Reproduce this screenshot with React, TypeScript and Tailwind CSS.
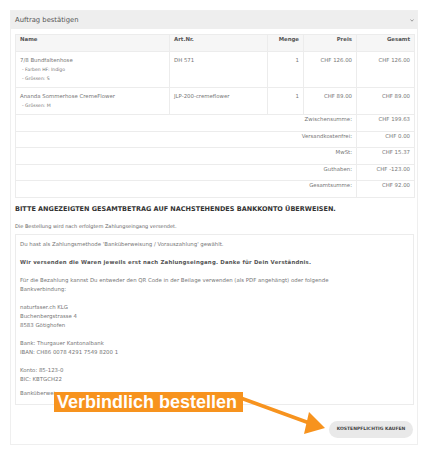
import React from "react";

type Item = { name: string; subs: string[]; art: string; qty: number; price: string; total: string };

const items: Item[] = [
  { name: "7/8 Bundfaltenhose", subs: ["- Farben HF: Indigo", "- Grössen: S"], art: "DH 571", qty: 1, price: "CHF 126.00", total: "CHF 126.00" },
  { name: "Ananda Sommerhose CremeFlower", subs: ["- Grössen: M"], art: "JLP-200-cremeflower", qty: 1, price: "CHF 89.00", total: "CHF 89.00" },
];

const totals = [
  ["Zwischensumme:", "CHF 199.63"],
  ["Versandkostenfrei:", "CHF 0.00"],
  ["MwSt:", "CHF 15.37"],
  ["Guthaben:", "CHF -123.00"],
  ["Gesamtsumme:", "CHF 92.00"],
];

const cell = "border border-[#ececec] px-[4px] align-top";

export default function App() {
  return (
    <div className="relative w-[440px] h-[456px] bg-white pt-[10px] pl-[10px] font-['DejaVu_Sans',sans-serif] text-[#777]">
      <div className="w-[408px] border border-[#efefef] pb-[6px]">
        {/* Header */}
        <div className="flex h-[18px] items-center justify-between bg-[#eeeeee] pl-[4px] pr-[3px] text-[6.8px] text-[#555]">
          <span>Auftrag bestätigen</span>
          <svg width="4" height="3" viewBox="0 0 4 3" className="mt-[1px]">
            <path d="M0.5 0.5 L2 2.2 L3.5 0.5" fill="none" stroke="#888" strokeWidth="0.8" />
          </svg>
        </div>

        <div className="px-[4px] pt-[5px]">
          <table className="w-[399px] border-collapse table-fixed text-[5.4px] leading-[9px]">
            <colgroup>
              <col className="w-[154px]" />
              <col className="w-[98px]" />
              <col className="w-[36px]" />
              <col className="w-[53px]" />
              <col className="w-[58px]" />
            </colgroup>
            <thead>
              <tr className="h-[17px] bg-[#f6f6f6] font-bold text-[#555]">
                <th className={`${cell} text-left align-middle`}>Name</th>
                <th className={`${cell} text-left align-middle`}>Art.Nr.</th>
                <th className={`${cell} text-right align-middle`}>Menge</th>
                <th className={`${cell} text-right align-middle`}>Preis</th>
                <th className={`${cell} text-right align-middle`}>Gesamt</th>
              </tr>
            </thead>
            <tbody>
              {items.map((it) => (
                <tr key={it.name}>
                  <td className={`${cell} py-[4px]`}>
                    <div>{it.name}</div>
                    {it.subs.map((s) => (
                      <div key={s} className="pl-[2px] text-[4.6px]">{s}</div>
                    ))}
                  </td>
                  <td className={`${cell} py-[4px]`}>{it.art}</td>
                  <td className={`${cell} py-[4px] text-right`}>{it.qty}</td>
                  <td className={`${cell} py-[4px] text-right`}>{it.price}</td>
                  <td className={`${cell} py-[4px] text-right`}>{it.total}</td>
                </tr>
              ))}
              {totals.map(([label, value]) => (
                <tr key={label} className="h-[16.5px]">
                  <td colSpan={4} className={`${cell} text-right align-middle`}>{label}</td>
                  <td className={`${cell} text-right align-middle`}>{value}</td>
                </tr>
              ))}
            </tbody>
          </table>

          <h3 className="mt-[7px] text-[6.5px] leading-[8px] font-bold text-[#333]">
            BITTE ANGEZEIGTEN GESAMTBETRAG AUF NACHSTEHENDES BANKKONTO ÜBERWEISEN.
          </h3>
          <p className="mt-[9px] text-[5px] leading-[8px] text-[#666]">
            Die Bestellung wird nach erfolgtem Zahlungseingang versendet.
          </p>

          <div className="mt-[4px] w-[399px] border border-[#ececec] px-[4px] pt-[5px] pb-[6px] text-[5.4px] leading-[9px]">
            <p className="mb-[9px]">Du hast als Zahlungsmethode 'Banküberweisung / Vorauszahlung' gewählt.</p>
            <p className="mb-[9px] font-semibold tracking-[0.2px] text-[#555]">
              Wir versenden die Waren jeweils erst nach Zahlungseingang. Danke für Dein Verständnis.
            </p>
            <p className="mb-[9px]">
              Für die Bezahlung kannst Du entweder den QR Code in der Beilage verwenden (als PDF angehängt) oder folgende
              <br />
              Bankverbindung:
            </p>
            <p className="mb-[9px]">
              naturfaser.ch KLG
              <br />
              Buchenbergstrasse 4
              <br />
              8583 Götighofen
            </p>
            <p className="mb-[9px]">
              Bank: Thurgauer Kantonalbank
              <br />
              IBAN: CH86 0078 4291 7549 8200 1
            </p>
            <p className="mb-[5px]">
              Konto: 85-123-0
              <br />
              BIC: KBTGCH22
            </p>
            <p>Banküberweisung</p>
          </div>

          <div className="mt-[16px] flex justify-end">
            <button className="h-[17px] w-[84px] rounded-full bg-[#e9e9e9] text-[4.5px] font-bold text-[#444]">
              KOSTENPFLICHTIG KAUFEN
            </button>
          </div>
        </div>
      </div>

      {/* Annotation overlay */}
      <svg className="absolute left-0 top-0 pointer-events-none" width="440" height="456">
        <line x1="238" y1="397" x2="312" y2="424" stroke="#f7931e" strokeWidth="3.5" />
        <polygon points="309,412 304,434 325,428" fill="#f7931e" />
      </svg>
      <div className="absolute left-[54px] top-[392px] h-[20px] bg-[#f7931e] pl-[3px] pr-[6px] font-['Liberation_Sans',sans-serif] text-[18px] leading-[20px] font-bold text-white">
        Verbindlich bestellen
      </div>
    </div>
  );
}
